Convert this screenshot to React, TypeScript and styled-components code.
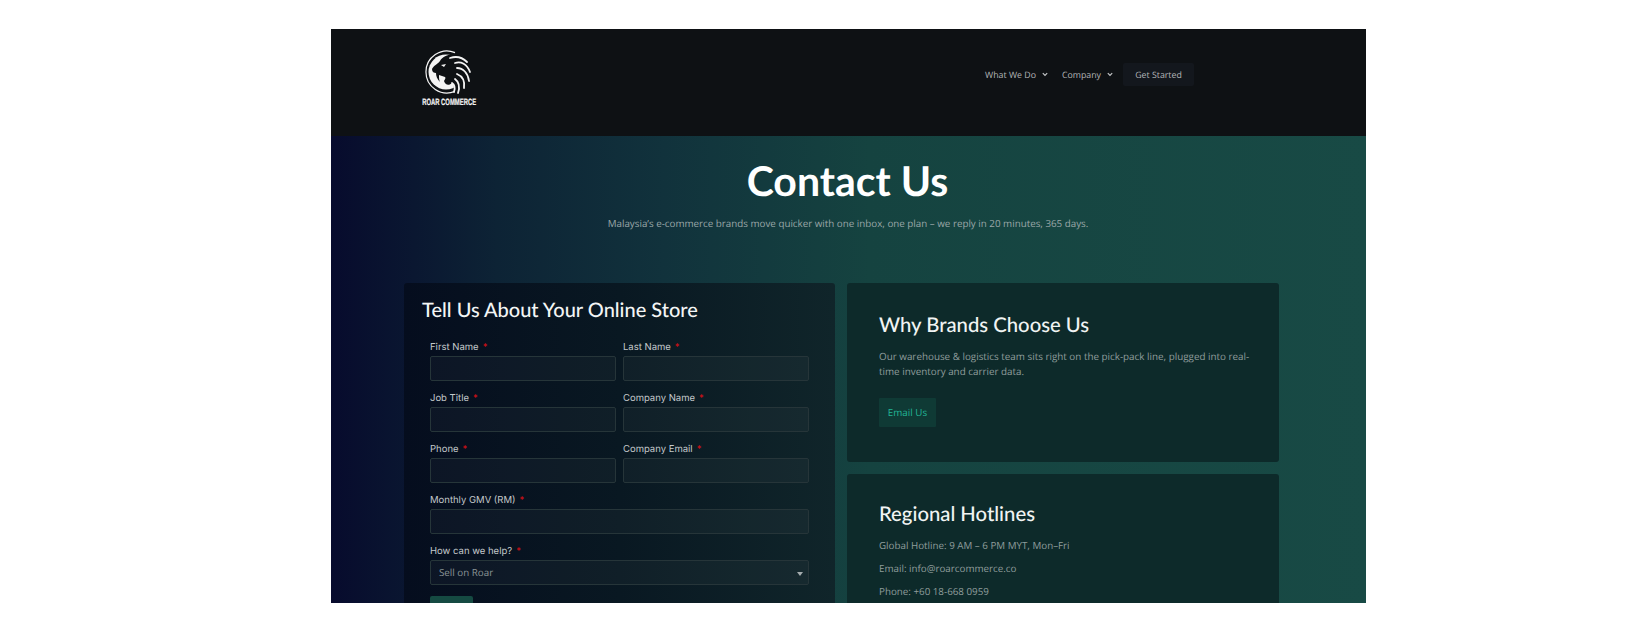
import React, { ReactElement } from 'react';
import styled, { createGlobalStyle } from 'styled-components';

const GlobalStyle = createGlobalStyle`
    html, body {
        margin: 0;
        padding: 0;
        background: #fff;
        text-rendering: geometricPrecision;
    }
    * {
        box-sizing: border-box;
    }
`;

const Page = styled.div`
    width: 1640px;
    height: 640px;
    padding: 29px 274px 37px 331px;
    overflow: hidden;
`;

const Frame = styled.div`
    height: 574px;
    overflow: hidden;
    font-family: 'Open Sans', sans-serif;
`;

const Header = styled.header`
    height: 107px;
    background: #0e1114;
    display: flex;
    justify-content: space-between;
    padding: 21px 172px 0 90px;
`;

const LogoBox = styled.div`
    width: 56px;
    display: flex;
    flex-direction: column;
    align-items: center;
`;

const LogoText = styled.span`
    font-family: 'Liberation Sans', sans-serif;
    font-weight: 700;
    font-size: 9.2px;
    line-height: 9px;
    color: #f2f2f2;
    -webkit-text-stroke: 0.2px #f2f2f2;
    white-space: nowrap;
    margin-top: 2px;
    transform: scaleX(0.64);
`;

const Nav = styled.nav`
    display: flex;
    align-items: center;
    height: 23px;
    margin-top: 13px;
`;

const NavItem = styled.span`
    display: flex;
    align-items: center;
    gap: 6px;
    font-size: 8.8px;
    color: #b4b6b8;
    margin-right: 14px;
    &:nth-child(2) {
        margin-right: 10px;
    }
`;

const NavButton = styled.span`
    height: 23px;
    width: 71px;
    display: flex;
    align-items: center;
    justify-content: center;
    background: #13171d;
    border-radius: 2px;
    font-size: 8.8px;
    color: #b4b6b8;
`;

const Hero = styled.main`
    height: 467px;
    background: linear-gradient(90deg, #070b2d 0%, #0d2335 16%, #11323c 32%, #154340 52%, #184a45 100%);
    padding: 0 87px 0 73px;
`;

const Title = styled.h1`
    margin: 0;
    padding-top: 19px;
    font-family: Lato, sans-serif;
    font-weight: 700;
    font-size: 41px;
    line-height: 52px;
    color: #fff;
    text-align: center;
    margin-left: -1px;
    margin-right: -13px;
`;

const Subtitle = styled.p`
    margin: 9px -13px 0 0;
    font-size: 9.8px;
    line-height: 16px;
    color: #9aa7a8;
    text-align: center;
`;

const Columns = styled.div`
    display: grid;
    grid-template-columns: 431px 432px;
    gap: 12px;
    margin-top: 51px;
`;

const FormCard = styled.section`
    background: linear-gradient(90deg, #050d1e 0%, #091822 50%, #10252a 100%);
    border-radius: 3px;
    height: 340px;
    padding: 16px 26.5px 0 26px;
`;

const FormTitle = styled.h2`
    margin: 0 0 0 -8px;
    font-family: Lato, sans-serif;
    font-weight: 500;
    font-size: 20px;
    line-height: 23px;
    color: #f3f5f5;
`;

const FormGrid = styled.div`
    display: grid;
    grid-template-columns: 1fr 1fr;
    column-gap: 7.5px;
    row-gap: 8px;
    margin-top: 16px;
`;

const Field = styled.label<{ $wide?: boolean }>`
    display: block;
    grid-column: ${(p) => (p.$wide ? '1 / span 2' : 'auto')};
`;

const FieldLabel = styled.span`
    display: block;
    padding-top: 2px;
    font-family: Inter, sans-serif;
    font-size: 9.5px;
    line-height: 16px;
    color: #c4c9cb;
`;

const Required = styled.span`
    color: #d40f16;
    margin-left: 4px;
`;

const TextInput = styled.div`
    display: flex;
    align-items: center;
    justify-content: space-between;
    height: 25px;
    background: rgba(255, 255, 255, 0.03);
    border: 1px solid #263539;
    border-radius: 2px;
    padding: 0 5px 0 8px;
    font-size: 9.8px;
    color: #8b9496;
`;

const Caret = styled.span`
    width: 0;
    height: 0;
    border-left: 3px solid transparent;
    border-right: 3px solid transparent;
    border-top: 4px solid #a5acae;
    margin-top: 2px;
`;

const SubmitStub = styled.div`
    width: 43px;
    height: 30px;
    margin-top: 11px;
    background: #154a42;
    border-radius: 2px;
`;

const SideColumn = styled.div`
    display: flex;
    flex-direction: column;
    gap: 12px;
`;

const InfoCard = styled.section<{ $height: number; $top: number }>`
    height: ${(p) => p.$height}px;
    background: #0d2a2a;
    border-radius: 3px;
    padding: ${(p) => p.$top}px 24px 0 32px;
`;

const InfoTitle = styled.h2`
    margin: 0;
    font-family: Lato, sans-serif;
    font-weight: 500;
    font-size: 20.3px;
    line-height: 26px;
    color: #f1f4f3;
`;

const InfoText = styled.p`
    margin: 11px 0 0;
    font-size: 9.85px;
    line-height: 14.7px;
    color: #8f9d9c;
`;

const InfoLine = styled.p<{ $first?: boolean }>`
    margin: ${(p) => (p.$first ? '11px' : '8px')} 0 0;
    font-size: 9.8px;
    line-height: 15px;
    color: #8f9d9c;
`;

const EmailButton = styled.span`
    display: flex;
    align-items: center;
    justify-content: center;
    width: 57px;
    height: 29px;
    margin-top: 20px;
    background: #0f3a35;
    border-radius: 1px;
    font-size: 9.8px;
    color: #22b596;
`;

const Chevron = (): ReactElement => (
    <svg width="6" height="5" viewBox="0 0 6 5" fill="none">
        <path d="M0.8 1.2 L3 3.4 L5.2 1.2" stroke="#c4c6c8" strokeWidth="1.2" />
    </svg>
);

const LionLogo = (): ReactElement => (
    <svg width="50" height="46" viewBox="0 0 50 46">
        <path d="M31 2.6 A21 21 0 1 0 31 41.4" fill="none" stroke="#f4f4f4" strokeWidth="1.2" />
        <circle cx="22" cy="22" r="17.5" fill="#f4f4f4" />
        <path
            d="M8 19 C10 15 14 14 16 11 C18 7 24 4 31 4 C38 5 43 10 44 18 C45 26 42 34 36 41 L31 42 C30 38 30 34 28 33 C25 36 21 35 20 31 C21 29 22 28 21 27 L15 25 C15 28 15 30 16 32 C13 29 12 26 12 23 C10 23 8 22 8 19 Z"
            fill="#0e1114"
        />
        <g fill="none" stroke="#f4f4f4" strokeWidth="1.8" strokeLinecap="round">
            <path d="M26 8 C32 6 38 7 43 12" />
            <path d="M31 13 C37 11 43 14 46 22" />
            <path d="M33 18 C39 18 44 23 45 31" />
            <path d="M33 24 C38 26 41 31 40 38" />
            <path d="M31 29 C35 32 36 37 34 43" />
            <path d="M28 33 C31 35 31 39 30 42" />
        </g>
        <path d="M17 15 L22 14 L20 17 Z" fill="#f4f4f4" />
    </svg>
);

interface IField {
    label: string;
    wide?: boolean;
}

const fields: IField[] = [
    { label: 'First Name' },
    { label: 'Last Name' },
    { label: 'Job Title' },
    { label: 'Company Name' },
    { label: 'Phone' },
    { label: 'Company Email' },
    { label: 'Monthly GMV (RM)', wide: true },
];

const App = (): ReactElement => {
    return (
        <Page>
            <GlobalStyle />
            <Frame>
                <Header>
                    <LogoBox>
                        <LionLogo />
                        <LogoText>ROAR COMMERCE</LogoText>
                    </LogoBox>
                    <Nav>
                        <NavItem>
                            What We Do <Chevron />
                        </NavItem>
                        <NavItem>
                            Company <Chevron />
                        </NavItem>
                        <NavButton>Get Started</NavButton>
                    </Nav>
                </Header>
                <Hero>
                    <Title>Contact Us</Title>
                    <Subtitle>
                        Malaysia’s e-commerce brands move quicker with one inbox, one plan – we reply in 20 minutes, 365 days.
                    </Subtitle>
                    <Columns>
                        <FormCard>
                            <FormTitle>Tell Us About Your Online Store</FormTitle>
                            <FormGrid>
                                {fields.map(
                                    ({ label, wide }: IField): ReactElement => {
                                        return (
                                            <Field key={label} $wide={wide}>
                                                <FieldLabel>
                                                    {label}
                                                    <Required>*</Required>
                                                </FieldLabel>
                                                <TextInput />
                                            </Field>
                                        );
                                    }
                                )}
                                <Field $wide>
                                    <FieldLabel>
                                        How can we help?
                                        <Required>*</Required>
                                    </FieldLabel>
                                    <TextInput>
                                        Sell on Roar
                                        <Caret />
                                    </TextInput>
                                </Field>
                            </FormGrid>
                            <SubmitStub />
                        </FormCard>
                        <SideColumn>
                            <InfoCard $height={179} $top={29}>
                                <InfoTitle>Why Brands Choose Us</InfoTitle>
                                <InfoText>
                                    Our warehouse &amp; logistics team sits right on the pick-pack line, plugged into real-time
                                    inventory and carrier data.
                                </InfoText>
                                <EmailButton>Email Us</EmailButton>
                            </InfoCard>
                            <InfoCard $height={200} $top={27}>
                                <InfoTitle>Regional Hotlines</InfoTitle>
                                <InfoLine $first>Global Hotline: 9 AM – 6 PM MYT, Mon–Fri</InfoLine>
                                <InfoLine>Email: info@roarcommerce.co</InfoLine>
                                <InfoLine>Phone: +60 18-668 0959</InfoLine>
                            </InfoCard>
                        </SideColumn>
                    </Columns>
                </Hero>
            </Frame>
        </Page>
    );
};

export default App;
